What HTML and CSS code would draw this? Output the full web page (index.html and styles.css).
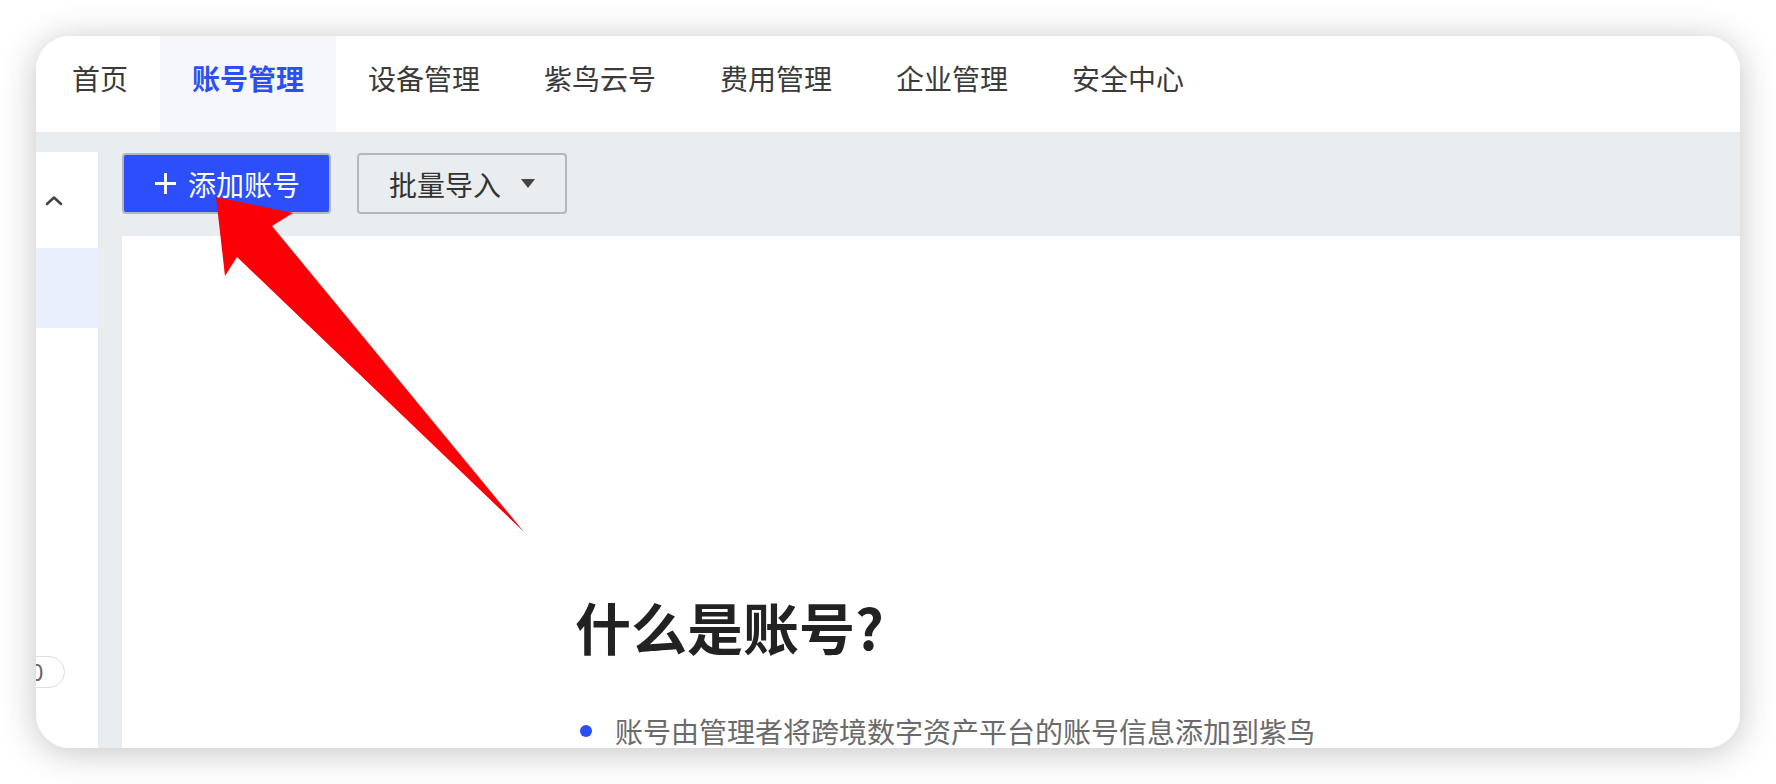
FILE: index.html
```html
<!DOCTYPE html>
<html lang="zh-CN">
<head>
  <meta charset="UTF-8">
  <title>账号管理</title>
  <link rel="stylesheet" href="styles.css">
</head>
<body>
  <div class="window">
    <nav class="tabs">
      <a class="tab">首页</a>
      <a class="tab active">账号管理</a>
      <a class="tab">设备管理</a>
      <a class="tab">紫鸟云号</a>
      <a class="tab">费用管理</a>
      <a class="tab">企业管理</a>
      <a class="tab">安全中心</a>
    </nav>
    <div class="body">
      <aside class="side">
        <div class="side-head">
          <svg viewBox="0 0 18 11" fill="none"><path d="M2 9L9 2.5L16 9" stroke="#444" stroke-width="2.6" stroke-linecap="round" stroke-linejoin="round"/></svg>
        </div>
        <div class="side-item active"></div>
        <div class="side-foot"><span class="pill">10</span></div>
      </aside>
      <main class="main">
        <div class="toolbar">
          <button class="btn primary">
            <svg viewBox="0 0 24 24" fill="none"><path d="M12 1V23M1 12H23" stroke="#fff" stroke-width="3"/></svg>
            添加账号
          </button>
          <button class="btn ghost">
            批量导入
            <svg class="caret" viewBox="0 0 14 9"><path d="M0 0H14L7 9Z" fill="#444"/></svg>
          </button>
        </div>
        <section class="content">
          <div class="intro">
            <h1>什么是账号?</h1>
            <ul>
              <li>账号由管理者将跨境数字资产平台的账号信息添加到紫鸟</li>
            </ul>
          </div>
        </section>
      </main>
    </div>
    <!-- 标注箭头 -->
    <svg class="arrow" viewBox="0 0 1704 712">
      <polygon points="180,161 257,177 236,190 488,496 201,221 189,240" fill="#fb0007"/>
    </svg>
  </div>
</body>
</html>
```

FILE: styles.css
```css
body {
  margin: 0;
  background: #fff;
  font-family: "Noto Sans CJK SC", "Noto Sans", sans-serif;
}
.window {
  position: relative;
  margin: 36px;
  width: 1704px;
  height: 712px;
  border-radius: 34px;
  overflow: hidden;
  background: #fff;
  box-shadow: 0 4px 36px rgba(0,0,0,0.24);
  display: flex;
  flex-direction: column;
}
.tabs {
  display: flex;
  height: 96px;
  padding-left: 4px;
  background: #fff;
  flex-shrink: 0;
}
.tab {
  padding: 0 32px;
  height: 96px;
  line-height: 84px;
  font-size: 28px;
  color: #3a3a3a;
  cursor: pointer;
}
.tab.active {
  background: #f5f7fa;
  color: #2b4ff6;
  font-weight: 700;
}
.body {
  flex: 1;
  display: flex;
  background: #eaedf0;
  min-height: 0;
}
.side {
  width: 62px;
  margin-top: 20px;
  background: #fff;
  display: flex;
  flex-direction: column;
  overflow: hidden;
  flex-shrink: 0;
}
.side-head {
  height: 96px;
  display: flex;
  align-items: center;
  padding-left: 9px;
}
.side-head svg {
  width: 18px;
  height: 11px;
}
.side-item {
  height: 80px;
}
.side-item.active {
  background: #e8effd;
}
.side-foot {
  margin-top: 328px;
  display: flex;
}
.pill {
  margin-left: -32px;
  height: 30px;
  padding: 0 21px 0 12px;
  border: 1.5px solid #dedede;
  border-radius: 16px;
  font-size: 23px;
  line-height: 30px;
  color: #666;
  font-family: "Noto Sans", sans-serif;
}
.main {
  flex: 1;
  margin-left: 24px;
  display: flex;
  flex-direction: column;
}
.toolbar {
  height: 104px;
  box-sizing: border-box;
  padding-top: 21px;
  display: flex;
  gap: 26px;
  align-items: flex-start;
  flex-shrink: 0;
}
.btn {
  height: 61px;
  box-sizing: border-box;
  border: 2px solid #b4b7bc;
  border-radius: 4px;
  font-family: inherit;
  font-size: 28px;
  display: flex;
  align-items: center;
  cursor: pointer;
}
.btn.primary {
  width: 209px;
  padding: 0 0 0 30px;
  gap: 11px;
  background: #2c4ffb;
  color: #fff;
}
.btn.primary svg {
  width: 23px;
  height: 23px;
}
.btn.ghost {
  width: 210px;
  padding: 0 0 0 30px;
  gap: 20px;
  background: transparent;
  color: #333;
}
.btn .caret {
  width: 14px;
  height: 9px;
}
.content {
  flex: 1;
  background: #fff;
}
.intro {
  padding: 356px 0 0 453px;
}
.intro h1 {
  margin: 0;
  font-size: 56px;
  line-height: 67px;
  font-weight: 700;
  color: #222;
}
.intro ul {
  list-style: none;
  margin: 55px 0 0 0;
  padding: 0 0 0 5px;
}
.intro li {
  display: flex;
  align-items: center;
  gap: 23px;
  font-size: 28px;
  line-height: 34px;
  color: #6a6a6a;
}
.intro li::before {
  content: "";
  width: 12px;
  height: 12px;
  border-radius: 50%;
  background: #2b4ff6;
}
.arrow {
  position: absolute;
  left: 0;
  top: 0;
  width: 1704px;
  height: 712px;
  pointer-events: none;
}
```
